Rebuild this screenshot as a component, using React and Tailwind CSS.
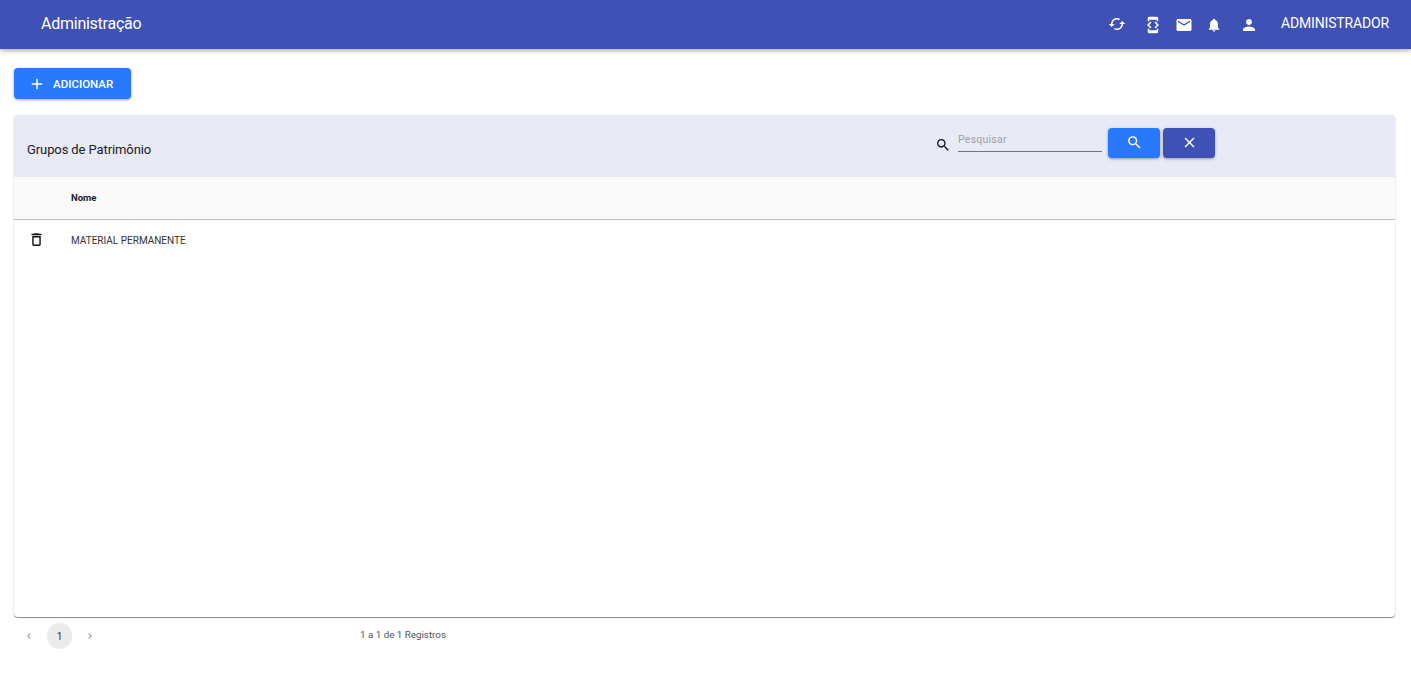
const P = {
  sync: "M12 4V1L8 5l4 4V6c3.31 0 6 2.69 6 6 0 1.01-.25 1.97-.7 2.8l1.46 1.46C19.54 15.03 20 13.57 20 12c0-4.42-3.58-8-8-8zm0 14c-3.31 0-6-2.69-6-6 0-1.01.25-1.97.7-2.8L5.24 7.74C4.46 8.97 4 10.43 4 12c0 4.42 3.58 8 8 8v3l4-4-4-4v3z",
  dev: "M7 5h10v2h2V3c0-1.1-.9-1.99-2-1.99L7 1c-1.1 0-2 .9-2 2v4h2V5zm8.41 11.59L20 12l-4.59-4.59L14 8.83 17.17 12 14 15.17l1.41 1.42zM10 15.17L6.83 12 10 8.83 8.59 7.41 4 12l4.59 4.59L10 15.17zM17 19H7v-2H5v4c0 1.1.9 2 2 2h10c1.1 0 2-.9 2-2v-4h-2v2z",
  mail: "M20 4H4c-1.1 0-1.99.9-1.99 2L2 18c0 1.1.9 2 2 2h16c1.1 0 2-.9 2-2V6c0-1.1-.9-2-2-2zm0 4l-8 5-8-5V6l8 5 8-5v2z",
  bell: "M12 22c1.1 0 2-.9 2-2h-4c0 1.1.89 2 2 2zm6-6v-5c0-3.07-1.64-5.64-4.5-6.32V4c0-.83-.67-1.5-1.5-1.5s-1.5.67-1.5 1.5v.68C7.63 5.36 6 7.92 6 11v5l-2 2v1h16v-1l-2-2z",
  person: "M12 12c2.21 0 4-1.79 4-4s-1.79-4-4-4-4 1.79-4 4 1.79 4 4 4zm0 2c-2.67 0-8 1.34-8 4v2h16v-2c0-2.66-5.33-4-8-4z",
  search: "M15.5 14h-.79l-.28-.27C15.41 12.59 16 11.11 16 9.5 16 5.91 13.09 3 9.5 3S3 5.91 3 9.5 5.91 16 9.5 16c1.61 0 3.09-.59 4.23-1.57l.27.28v.79l5 4.99L20.49 19l-4.99-5zm-6 0C7.01 14 5 11.99 5 9.5S7.01 5 9.5 5 14 7.01 14 9.5 11.99 14 9.5 14z",
  close: "M19 6.41L17.59 5 12 10.59 6.41 5 5 6.41 10.59 12 5 17.59 6.41 19 12 13.41 17.59 19 19 17.59 13.41 12z",
  add: "M19 13h-6v6h-2v-6H5v-2h6V5h2v6h6v2z",
  trash: "M6 19c0 1.1.9 2 2 2h8c1.1 0 2-.9 2-2V7H6v12zM8 9h8v10H8V9zm7.5-5l-1-1h-5l-1 1H5v2h14V4z",
  left: "M15.41 7.41L14 6l-6 6 6 6 1.41-1.41L10.83 12z",
  right: "M10 6L8.59 7.41 13.17 12l-4.58 4.59L10 18l6-6z",
};

function Icon({ d, size = 18, className = "" }) {
  return (
    <svg width={size} height={size} viewBox="0 0 24 24" fill="currentColor" className={`shrink-0 ${className}`}>
      <path d={d} />
    </svg>
  );
}

export default function App() {
  return (
    <div className="min-h-[685px] bg-white font-['Roboto',sans-serif] text-[#212121]">
      <header className="flex h-[49px] items-center justify-between bg-[#3f51b5] pl-[41px] pr-[22px] text-white shadow-[0_2px_4px_rgba(0,0,0,0.3)]">
        <h1 className="mb-[2px] text-[16px] font-normal tracking-[-0.25px]">Administração</h1>
        <div className="flex items-center">
          <Icon d={P.sync} size={18} className="mb-[1px] mr-[18px] rotate-90" />
          <Icon d={P.dev} size={18} className="mr-[13px]" />
          <Icon d={P.mail} size={18} className="mr-[13px]" />
          <Icon d={P.bell} size={16} className="mr-[18px]" />
          <Icon d={P.person} size={18} className="mr-[23px]" />
          <span className="mb-[2px] text-[14px] tracking-[-0.15px]">ADMINISTRADOR</span>
        </div>
      </header>

      <main className="pl-[14px] pr-[16px] pt-[19px]">
        <button className="flex h-[31px] w-[117px] items-center rounded-[4px] bg-[#2979ff] pl-[14px] text-[11.5px] font-medium text-white shadow-[0_1px_3px_rgba(0,0,0,0.35)]">
          <Icon d={P.add} size={18} className="mr-[7px]" />
          <span className="pt-[2px]">ADICIONAR</span>
        </button>

        <section className="mt-[16px] flex h-[502px] flex-col overflow-hidden rounded-[4px] bg-white shadow-[0_1px_1px_rgba(0,0,0,0.45),0_0_2px_rgba(0,0,0,0.1)]">
          <div className="flex h-[62px] justify-between bg-[#e8eaf6] pl-[13px] pr-[180px]">
            <h2 className="mt-[27px] self-start text-[13px] font-normal leading-[16px] tracking-[-0.1px]">Grupos de Patrimônio</h2>
            <div className="mt-[13px] flex items-start self-start">
              <Icon d={P.search} size={16} className="mr-[7px] mt-[9px] text-[#111]" />
              <div className="mr-[6px] h-[24px] w-[144px] border-b border-[#777] pt-[4px] text-[10.5px] leading-[16px] tracking-[0.25px] text-[#a0a0a8]">
                Pesquisar
              </div>
              <button className="mr-[3px] flex h-[30px] w-[52px] items-center justify-center rounded-[4px] bg-[#2979ff] pb-[2px] text-white shadow-[0_1px_3px_rgba(0,0,0,0.35)]">
                <Icon d={P.search} size={17} />
              </button>
              <button className="flex h-[30px] w-[52px] items-center justify-center rounded-[4px] bg-[#3f51b5] pb-[2px] text-white shadow-[0_1px_3px_rgba(0,0,0,0.35)]">
                <Icon d={P.close} size={17} />
              </button>
            </div>
          </div>
          <div className="flex h-[43px] items-center border-b border-[#bdbdbd] bg-[#fafafa] pl-[57px] text-[9.5px] font-bold">
            Nome
          </div>
          <div className="flex h-[40px] items-center pl-[14px] text-[10px] text-[#333]">
            <Icon d={P.trash} size={17} className="mb-[2px] mr-[26px] text-[#111]" />
            <span>MATERIAL PERMANENTE</span>
          </div>
        </section>

        <nav className="mt-[6px] flex items-center text-[#555]">
          <Icon d={P.left} size={12} className="ml-[9px] text-[#999]" />
          <span className="ml-[12px] flex h-[26px] w-[25px] items-center justify-center rounded-full bg-[#ebebeb] text-[10px] text-[#333]">
            1
          </span>
          <Icon d={P.right} size={12} className="ml-[12px] text-[#999]" />
          <span className="mb-[2px] ml-[264px] text-[9.8px] text-[#4a5560]">1 a 1 de 1 Registros</span>
        </nav>
      </main>
    </div>
  );
}
